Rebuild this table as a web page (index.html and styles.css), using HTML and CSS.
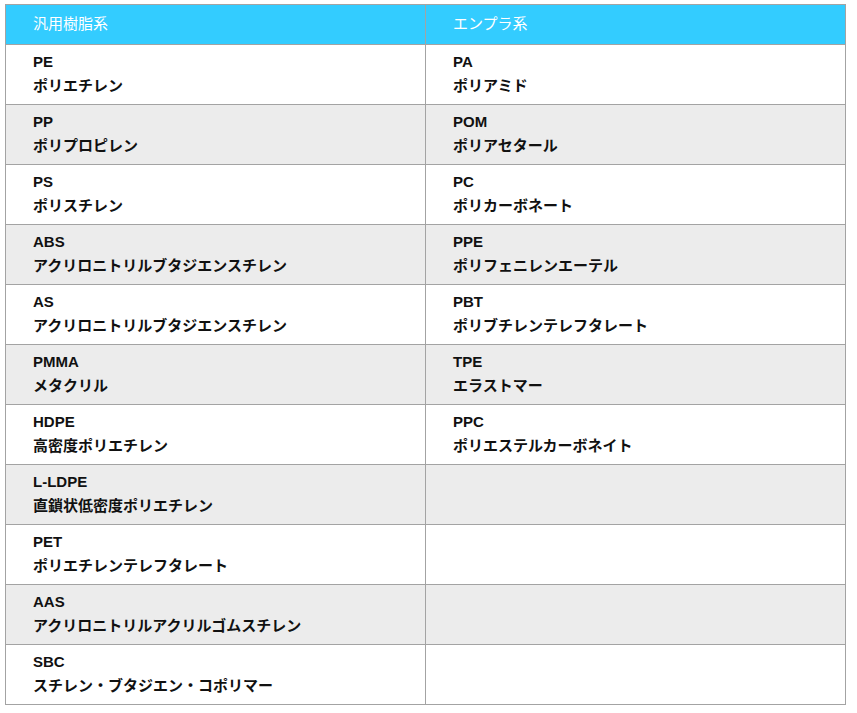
FILE: index.html
```html
<!DOCTYPE html>
<html lang="ja">
<head>
<meta charset="utf-8">
<link rel="stylesheet" href="styles.css">
</head>
<body>
<div class="wrap">
<table class="resin">
<thead>
<tr><th>汎用樹脂系</th><th>エンプラ系</th></tr>
</thead>
<tbody>
<tr><td>PE<br>ポリエチレン</td><td>PA<br>ポリアミド</td></tr>
<tr><td>PP<br>ポリプロピレン</td><td>POM<br>ポリアセタール</td></tr>
<tr><td>PS<br>ポリスチレン</td><td>PC<br>ポリカーボネート</td></tr>
<tr><td>ABS<br>アクリロニトリルブタジエンスチレン</td><td>PPE<br>ポリフェニレンエーテル</td></tr>
<tr><td>AS<br>アクリロニトリルブタジエンスチレン</td><td>PBT<br>ポリブチレンテレフタレート</td></tr>
<tr><td>PMMA<br>メタクリル</td><td>TPE<br>エラストマー</td></tr>
<tr><td>HDPE<br>高密度ポリエチレン</td><td>PPC<br>ポリエステルカーボネイト</td></tr>
<tr><td>L-LDPE<br>直鎖状低密度ポリエチレン</td><td></td></tr>
<tr><td>PET<br>ポリエチレンテレフタレート</td><td></td></tr>
<tr><td>AAS<br>アクリロニトリルアクリルゴムスチレン</td><td></td></tr>
<tr><td>SBC<br>スチレン・ブタジエン・コポリマー</td><td></td></tr>
</tbody>
</table>
</div>
</body>
</html>
```
FILE: styles.css
```css
html, body {
  margin: 0;
  padding: 0;
  background: #fff;
}
.wrap {
  padding: 4px 5px;
}
.resin {
  width: 841px;
  border-collapse: collapse;
  table-layout: fixed;
  font-family: "Liberation Sans", "Noto Sans CJK JP", sans-serif;
  font-size: 15px;
  line-height: 24px;
  color: #111;
}
.resin th,
.resin td {
  border: 1px solid #a3a3a3;
  text-align: left;
  vertical-align: top;
  padding: 5px 10px 6px 27px;
}
.resin th {
  background: #33ccff;
  color: #fff;
  font-weight: normal;
  padding-top: 7px;
  padding-bottom: 8px;
}
.resin td {
  font-weight: bold;
  height: 48px;
}
.resin tbody tr:nth-child(even) td {
  background: #ececec;
}
```
